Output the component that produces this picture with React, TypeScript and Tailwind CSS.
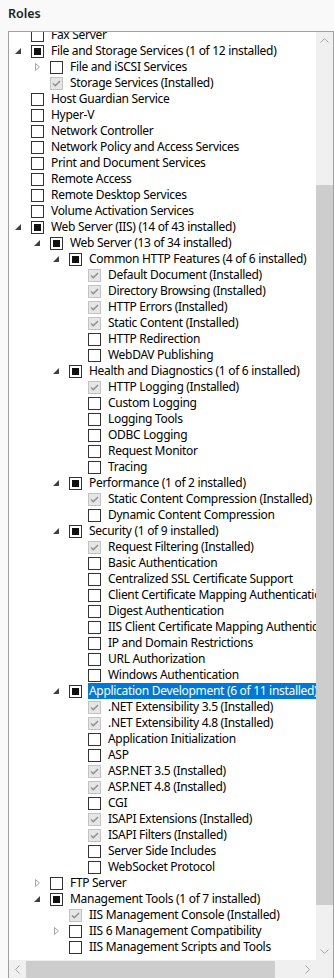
type CheckState = 'none' | 'partial' | 'installed';
type Expander = 'none' | 'open' | 'closed';

interface Row {
  level: number;
  label: string;
  check: CheckState;
  expander: Expander;
  selected?: boolean;
}

// tree rows, top one is half scrolled out of view
const rows: Row[] = [
  { level: 0, label: 'Fax Server', check: 'none', expander: 'none' },
  { level: 0, label: 'File and Storage Services (1 of 12 installed)', check: 'partial', expander: 'open' },
  { level: 1, label: 'File and iSCSI Services', check: 'none', expander: 'closed' },
  { level: 1, label: 'Storage Services (Installed)', check: 'installed', expander: 'none' },
  { level: 0, label: 'Host Guardian Service', check: 'none', expander: 'none' },
  { level: 0, label: 'Hyper-V', check: 'none', expander: 'none' },
  { level: 0, label: 'Network Controller', check: 'none', expander: 'none' },
  { level: 0, label: 'Network Policy and Access Services', check: 'none', expander: 'none' },
  { level: 0, label: 'Print and Document Services', check: 'none', expander: 'none' },
  { level: 0, label: 'Remote Access', check: 'none', expander: 'none' },
  { level: 0, label: 'Remote Desktop Services', check: 'none', expander: 'none' },
  { level: 0, label: 'Volume Activation Services', check: 'none', expander: 'none' },
  { level: 0, label: 'Web Server (IIS) (14 of 43 installed)', check: 'partial', expander: 'open' },
  { level: 1, label: 'Web Server (13 of 34 installed)', check: 'partial', expander: 'open' },
  { level: 2, label: 'Common HTTP Features (4 of 6 installed)', check: 'partial', expander: 'open' },
  { level: 3, label: 'Default Document (Installed)', check: 'installed', expander: 'none' },
  { level: 3, label: 'Directory Browsing (Installed)', check: 'installed', expander: 'none' },
  { level: 3, label: 'HTTP Errors (Installed)', check: 'installed', expander: 'none' },
  { level: 3, label: 'Static Content (Installed)', check: 'installed', expander: 'none' },
  { level: 3, label: 'HTTP Redirection', check: 'none', expander: 'none' },
  { level: 3, label: 'WebDAV Publishing', check: 'none', expander: 'none' },
  { level: 2, label: 'Health and Diagnostics (1 of 6 installed)', check: 'partial', expander: 'open' },
  { level: 3, label: 'HTTP Logging (Installed)', check: 'installed', expander: 'none' },
  { level: 3, label: 'Custom Logging', check: 'none', expander: 'none' },
  { level: 3, label: 'Logging Tools', check: 'none', expander: 'none' },
  { level: 3, label: 'ODBC Logging', check: 'none', expander: 'none' },
  { level: 3, label: 'Request Monitor', check: 'none', expander: 'none' },
  { level: 3, label: 'Tracing', check: 'none', expander: 'none' },
  { level: 2, label: 'Performance (1 of 2 installed)', check: 'partial', expander: 'open' },
  { level: 3, label: 'Static Content Compression (Installed)', check: 'installed', expander: 'none' },
  { level: 3, label: 'Dynamic Content Compression', check: 'none', expander: 'none' },
  { level: 2, label: 'Security (1 of 9 installed)', check: 'partial', expander: 'open' },
  { level: 3, label: 'Request Filtering (Installed)', check: 'installed', expander: 'none' },
  { level: 3, label: 'Basic Authentication', check: 'none', expander: 'none' },
  { level: 3, label: 'Centralized SSL Certificate Support', check: 'none', expander: 'none' },
  { level: 3, label: 'Client Certificate Mapping Authentication', check: 'none', expander: 'none' },
  { level: 3, label: 'Digest Authentication', check: 'none', expander: 'none' },
  { level: 3, label: 'IIS Client Certificate Mapping Authentication', check: 'none', expander: 'none' },
  { level: 3, label: 'IP and Domain Restrictions', check: 'none', expander: 'none' },
  { level: 3, label: 'URL Authorization', check: 'none', expander: 'none' },
  { level: 3, label: 'Windows Authentication', check: 'none', expander: 'none' },
  { level: 2, label: 'Application Development (6 of 11 installed)', check: 'partial', expander: 'open', selected: true },
  { level: 3, label: '.NET Extensibility 3.5 (Installed)', check: 'installed', expander: 'none' },
  { level: 3, label: '.NET Extensibility 4.8 (Installed)', check: 'installed', expander: 'none' },
  { level: 3, label: 'Application Initialization', check: 'none', expander: 'none' },
  { level: 3, label: 'ASP', check: 'none', expander: 'none' },
  { level: 3, label: 'ASP.NET 3.5 (Installed)', check: 'installed', expander: 'none' },
  { level: 3, label: 'ASP.NET 4.8 (Installed)', check: 'installed', expander: 'none' },
  { level: 3, label: 'CGI', check: 'none', expander: 'none' },
  { level: 3, label: 'ISAPI Extensions (Installed)', check: 'installed', expander: 'none' },
  { level: 3, label: 'ISAPI Filters (Installed)', check: 'installed', expander: 'none' },
  { level: 3, label: 'Server Side Includes', check: 'none', expander: 'none' },
  { level: 3, label: 'WebSocket Protocol', check: 'none', expander: 'none' },
  { level: 1, label: 'FTP Server', check: 'none', expander: 'closed' },
  { level: 1, label: 'Management Tools (1 of 7 installed)', check: 'partial', expander: 'open' },
  { level: 2, label: 'IIS Management Console (Installed)', check: 'installed', expander: 'none' },
  { level: 2, label: 'IIS 6 Management Compatibility', check: 'none', expander: 'closed' },
  { level: 2, label: 'IIS Management Scripts and Tools', check: 'none', expander: 'none' },
];

const indent: Record<number, string> = {
  0: 'pl-[1px]',
  1: 'pl-[20px]',
  2: 'pl-[39px]',
  3: 'pl-[58px]',
};

const ExpanderIcon = ({ kind }: { kind: Expander }) => {
  if (kind === 'open') {
    return (
      <svg width="16" height="16" viewBox="0 0 16 16">
        <path d="M11 5 L11 11 L5 11 Z" fill="#404040" />
      </svg>
    );
  }
  if (kind === 'closed') {
    return (
      <svg width="16" height="16" viewBox="0 0 16 16">
        <path d="M6.5 4.5 L10.5 8 L6.5 11.5 Z" fill="none" stroke="#a6a6a6" />
      </svg>
    );
  }
  return <span className="w-4 h-4" />;
};

const Checkbox = ({ state }: { state: CheckState }) => {
  if (state === 'installed') {
    return (
      <span className="w-[13px] h-[13px] border border-[#c2c2c2] bg-[#e6e6e6] flex items-center justify-center shrink-0">
        <svg width="11" height="11" viewBox="0 0 11 11">
          <path d="M2 5.5 L4.3 7.8 L9 3" fill="none" stroke="#8c8c8c" strokeWidth="1.4" />
        </svg>
      </span>
    );
  }
  return (
    <span className="w-[13px] h-[13px] border border-[#333333] bg-white flex items-center justify-center shrink-0">
      {state === 'partial' && <span className="w-[7px] h-[7px] bg-[#111111]" />}
    </span>
  );
};

const Chevron = ({ dir }: { dir: 'up' | 'down' | 'left' | 'right' }) => {
  const d = {
    up: 'M4.5 10.5 L8.5 6.5 L12.5 10.5',
    down: 'M4.5 6.5 L8.5 10.5 L12.5 6.5',
    left: 'M10.5 4.5 L6.5 8.5 L10.5 12.5',
    right: 'M6.5 4.5 L10.5 8.5 L6.5 12.5',
  }[dir];
  return (
    <svg width="17" height="17" viewBox="0 0 17 17">
      <path d={d} fill="none" stroke="#a3a3a3" strokeWidth="1" />
    </svg>
  );
};

export default function App() {
  return (
    <div className="w-[334px] h-[978px] overflow-hidden bg-[#f9f9f9] text-[12px] leading-4 tracking-[-0.3px] text-black font-['Segoe_UI','Noto_Sans',sans-serif]">
      <div className="pl-[8px] pt-[6px] h-[31px] text-[12.5px] font-semibold tracking-normal text-[#1e1e1e]">Roles</div>

      <div className="ml-[8px] w-[326px] h-[947px] border-t border-l border-r border-[#a0a0a0] bg-white flex flex-col">
        <div className="flex h-[928px]">
          {/* tree */}
          <div className="w-[307px] overflow-hidden">
            <div className="-mt-[5px]">
              {rows.map((row, i) => (
                <div key={i} className={`flex items-center h-4 whitespace-nowrap ${indent[row.level]}`}>
                  <span className="w-4 h-4 shrink-0">
                    <ExpanderIcon kind={row.expander} />
                  </span>
                  <span className="ml-[5px]">
                    <Checkbox state={row.check} />
                  </span>
                  <span
                    className={
                      row.selected
                        ? 'ml-[6px] px-[1px] h-4 bg-[#0078d7] text-white'
                        : 'ml-[7px]'
                    }
                  >
                    {row.label}
                  </span>
                </div>
              ))}
            </div>
          </div>

          {/* vertical scrollbar */}
          <div className="w-[17px] bg-[#f0f0f0] flex flex-col">
            <Chevron dir="up" />
            <div className="flex-1 flex flex-col">
              <div className="h-[136px]" />
              <div className="h-[720px] bg-[#cdcdcd]" />
            </div>
            <Chevron dir="down" />
          </div>
        </div>

        {/* horizontal scrollbar */}
        <div className="flex h-[18px] bg-[#f0f0f0]">
          <div className="w-[307px] flex items-center">
            <Chevron dir="left" />
            <div className="w-[249px] h-[17px] bg-[#cdcdcd]" />
            <div className="flex-1" />
            <Chevron dir="right" />
          </div>
          <div className="w-[17px]" />
        </div>
      </div>
    </div>
  );
}
